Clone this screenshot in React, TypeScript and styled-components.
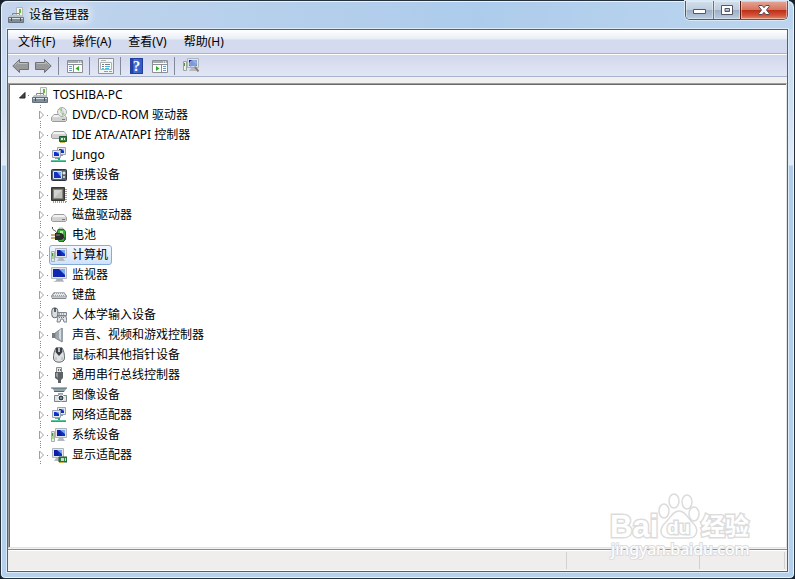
import React from "react";
import styled, { createGlobalStyle, css } from "styled-components";

const Global = createGlobalStyle`
  * { box-sizing: border-box; }
  html, body, #root { height: 100%; margin: 0; }
  body { background: #16202c; overflow: hidden; }
  body, button { font: 12px/16px "Noto Sans", "Noto Sans CJK SC", sans-serif; color: #000; }
  button { padding: 0; border: 0; background: none; }
  svg { display: block; flex: none; }
`;

const Window = styled.div`
  height: 100%;
  display: flex;
  flex-direction: column;
  padding: 0 6px 6px;
  border: 1px solid #26303b;
  border-radius: 7px 7px 5px 5px;
  box-shadow: inset 0 0 0 1px #e9f3fc;
  background: linear-gradient(#c4d8ef 0, #cfe0f3 110px, #e2ecf7 164px, #b0cce9 165px, #b5d0ec 100%);
`;

const TitleBar = styled.header`
  height: 28px;
  flex: none;
  margin: 0 -5px;
  display: flex;
  align-items: flex-start;
  justify-content: space-between;
  border-radius: 6px 6px 0 0;
  box-shadow: inset 0 1px #e9f3fc;
  background: linear-gradient(100deg, #c4d5ec 0, #bcd2ec 15%, #adcceb 60%, #bcd5ef 100%);
`;

const Title = styled.h1`
  margin: 0;
  padding: 6px 8px 0 6px;
  display: flex;
  align-items: center;
  gap: 5px;
  font-size: 12px;
  font-weight: 400;
  text-shadow: 0 0 8px #fff, 0 0 10px #fff, 0 0 14px #fff;
`;

const Captions = styled.div`
  display: flex;
  margin-right: 5px;
  border: 1px solid #4c5d73;
  border-top: 0;
  border-radius: 0 0 5px 5px;
  overflow: hidden;
  box-shadow: 0 0 0 1px #d9e8f7;
`;

const CaptionButton = styled.button<{ $close?: boolean }>`
  width: ${(p) => (p.$close ? 47 : 27)}px;
  height: 18px;
  display: grid;
  place-items: center;
  border-left: 1px solid #63758c;
  box-shadow: inset 0 0 0 1px #ffffff66;
  background: linear-gradient(#d3deea 0, #bfcddd 48%, #9caec4 50%, #b9cce0 100%);
  &:first-child { border-left: 0; }
  ${(p) => p.$close && css`
    border-left-color: #5e1b14;
    background: linear-gradient(#e5a796 0, #d67560 48%, #b92d14 50%, #d4533a 80%, #e08a6a 100%);
  `}
`;

const Client = styled.main`
  flex: 1;
  min-height: 0;
  display: flex;
  flex-direction: column;
  border: 1px solid #56616e;
  box-shadow: 0 0 0 1px #dceafa;
  background: #f0f0f0;
`;

const MenuBar = styled.nav`
  height: 24px;
  flex: none;
  display: flex;
  align-items: center;
  gap: 1px;
  padding: 0 2px;
  border-bottom: 1px solid #b0b3bb;
  background: linear-gradient(#fff 0, #e9edf7 9px, #d4daed 10px, #d5dbee 100%);
`;

const MenuItem = styled.button`
  height: 20px;
  padding: 0 8px;
`;

const ToolBar = styled.div`
  height: 23px;
  flex: none;
  display: flex;
  align-items: center;
  padding: 1px 1px 0;
  border-top: 1px solid #fff;
  border-bottom: 1px solid #a8b4cc;
  background: linear-gradient(#d2d8ec, #e1e7f5);
`;

const ToolButton = styled.button`
  width: 23px;
  height: 20px;
  display: grid;
  place-items: center;
`;

const Separator = styled.span`
  width: 1px;
  height: 18px;
  margin: 0 4px 0 3px;
  background: #84899a;
`;

const TreePane = styled.section`
  flex: 1;
  min-height: 0;
  margin: 6px 0 1px;
  padding-left: 8px;
  overflow: hidden;
  border: 1px solid #a0a0a0;
  border-right-color: #e3e3e3;
  border-bottom-color: #e3e3e3;
  box-shadow: inset 1px 1px #696969;
  background: #fff;
`;

const List = styled.ul`
  margin: 0;
  padding: 1px 0 0;
  list-style: none;
  & & { padding: 0 0 0 19px; }
`;

const Row = styled.div`
  height: 20px;
  display: flex;
  align-items: center;
`;

const Toggle = styled.button<{ $line?: boolean }>`
  width: 11px;
  height: 20px;
  display: grid;
  place-items: center;
  ${(p) => p.$line && css`
    background: repeating-linear-gradient(#888 0 1px, #fff 1px 2px) 4px 0 / 1px 100% no-repeat;
  `}
  svg { background: #fff; }
`;

const Dots = styled.span`
  width: 2px;
  height: 1px;
  background: repeating-linear-gradient(90deg, #888 0 1px, #fff 1px 2px);
`;

const Entry = styled.button<{ $selected?: boolean }>`
  height: 20px;
  display: flex;
  align-items: center;
  gap: 5px;
  padding: 0 3px 0 1px;
  border: 1px solid transparent;
  border-radius: 3px;
  white-space: nowrap;
  ${(p) => p.$selected && css`
    border-color: #84acdd;
    background: linear-gradient(#f2f7fe, #cfe2fb);
  `}
`;

const StatusBar = styled.footer`
  height: 22px;
  flex: none;
  display: flex;
  border-top: 1px solid #8d8d8d;
  background: #f0eded;
  box-shadow: inset 0 1px #fff, inset 0 -1px #fff;
`;

const StatusCell = styled.span<{ $grow?: boolean }>`
  flex: ${(p) => (p.$grow ? "1" : "0 1 133px")};
  margin: 2px 0;
  border-right: 1px solid #d2d0d0;
  &:last-child { flex-basis: 85px; margin-right: 2px; }
`;

const Watermark = styled.div`
  position: absolute;
  right: 40px;
  bottom: 14px;
  width: 146px;
  height: 72px;
  pointer-events: none;
`;

const Svg = ({ children, w = 16, h = 16 }: { children: React.ReactNode; w?: number; h?: number }) => (
  <svg width={w} height={h} viewBox={`0 0 ${w} ${h}`} aria-hidden="true">{children}</svg>
);

const Screen = ({ x = 0, y = 0 }: { x?: number; y?: number }) => (
  <g transform={`translate(${x} ${y})`}>
    <path d="M4 10h4l2 3H2z" fill="#b4b9bf" />
    <path d="M.5.5h11v9H.5z" fill="#e2e6ea" stroke="#b0b5bc" />
    <path d="M2 2h8v6H2z" fill="#1230c0" />
    <path d="M5 2h5v4z" fill="#7ba4f2" />
    <path d="M2 2h3l2 6H2z" fill="#0b1ea4" />
  </g>
);
const MiniScreen = ({ x, y }: { x: number; y: number }) => (
  <g transform={`translate(${x} ${y})`}>
    <path d="M.5.5h8v7h-8z" fill="#e6eaf0" stroke="#9aa4b4" />
    <path d="M2 2h5v4H2z" fill="#1230c0" />
    <path d="M4 2h3v2z" fill="#86acf5" />
    <path d="M3 8h3v1H3z" fill="#8e98a6" />
  </g>
);

const Computer = () => (
  <Svg>
    <Screen x={4} y={1} />
    <path d="M.5 4.500h3v10h-3z" fill="#eceee9" stroke="#a9aea6" />
    <path d="M1 6h2v6H1z" fill="#a9d59b" />
    <path d="M1 6h1v3H1z" fill="#3f9c33" />
  </Svg>
);
const Monitor = () => (
  <Svg>
    <path d="M6 11h5l2 4H4z" fill="#a9b0b8" />
    <path d="M.5.5h15v11H.5z" fill="#e2e6ea" stroke="#b3b8bf" />
    <path d="M2 2h12v8H2z" fill="#0e28b4" />
    <path d="M8 2h6v6z" fill="#83aaf5" />
    <path d="M3 14.500h10" stroke="#c4c8cc" />
  </Svg>
);
const Display = () => (
  <Svg>
    <Screen x={1} y={1} />
    <path d="M8 10h8v5H8z" fill="#2b8049" stroke="#235a35" />
    <path d="M10 11h3v3h-3zM14 11h1v3h-1z" fill="#c8dccb" />
    <path d="M8 15.500h5" stroke="#d5b23e" />
  </Svg>
);
const Network = () => (
  <Svg>
    <MiniScreen x={6} y={0} />
    <MiniScreen x={1} y={3} />
    <path d="M7 11h2v2h6v2H0v-2h7z" fill="#27a678" />
    <path d="M0 13.500h15" stroke="#5cc79c" />
  </Svg>
);
const Toolbox = () => (
  <Svg>
    <path d="M8.500.5h6v9h-6z" fill="#f3f5f0" stroke="#b2b8b2" />
    <path d="M11 2h2v4h-2z" fill="#61b948" />
    <path d="M4.500 9V6.500h7V9" fill="none" stroke="#7d868e" />
    <path d="M2 8h12l2 3H0z" fill="#b9c4cc" />
    <path d="M.5 10.500h15v5H.5z" fill="#7f8d98" stroke="#65727d" />
    <path d="M1 11.500h14" stroke="#dbe3e8" />
    <path d="M3 11h1v3H3zM12 11h1v3h-1z" fill="#444f57" />
  </Svg>
);
const Drive = ({ y = 0 }: { y?: number }) => (
  <g transform={`translate(0 ${y})`}>
    <path d="M3 5.500h10l2.500 3v3l-1 1H1.500l-1-1v-3z" fill="#b8bab9" stroke="#999c9b" />
    <path d="M3 6h10l2 2.500H1z" fill="#f2f2f2" />
    <path d="M1 9h14v3H1z" fill="#d0d1d0" />
    <path d="M11 10h3v1h-3z" fill="#38a33a" />
  </g>
);
const Optical = () => (
  <Svg>
    <Drive y={2} />
    <circle cx="11" cy="5" r="4.500" fill="#e6eaea" stroke="#a6adaf" />
    <path d="M11 5 8 2l3-1zM11 5l3 2-3 2z" fill="#9acd78" />
    <circle cx="11" cy="5" r="1.200" fill="#fff" stroke="#949b9d" strokeWidth=".6" />
  </Svg>
);
const Ide = () => (
  <Svg>
    <Drive y={-1} />
    <path d="M8.500 9.500h7v5h-7z" fill="#358a4a" stroke="#1c5831" />
    <path d="M10 11h2v2h-2zM13 11h1v2h-1z" fill="#dbe6d8" />
    <path d="M9 15.500h5" stroke="#ceb84d" />
  </Svg>
);
const Disk = () => <Svg><Drive y={2} /></Svg>;
const Portable = () => (
  <Svg>
    <rect x=".5" y="2.500" width="15" height="11" rx="1" fill="#56616d" stroke="#2c333c" />
    <path d="M2.500 4.500h8v7h-8z" fill="#1532bd" stroke="#d9e2ed" />
    <path d="M6 5h4v5z" fill="#7ea9f5" />
    <circle cx="13" cy="6" r="1.500" fill="#e3e8ec" />
    <path d="M12 9h2v2h-2z" fill="#c4cbd1" />
  </Svg>
);
const Cpu = () => (
  <Svg>
    <path d="M2 15h14M15 2v14" stroke="#c99b48" strokeWidth="2" strokeDasharray="1 1" />
    <path d="M.5.5h13v13H.5z" fill="#4f4e4b" stroke="#373633" />
    <path d="M2.500 2.500h9v9h-9z" fill="#bebebb" stroke="#858580" />
    <path d="M3 3h8l-8 8z" fill="#d2d2cf" />
  </Svg>
);
const Battery = () => (
  <Svg>
    <path d="M8 1h4v2H8z" fill="#d1d7d1" stroke="#8b928b" strokeWidth=".6" />
    <path d="M7 2.500h6l1.500 2v8l-2 2H8L6.500 12V4z" fill="#3fae3c" stroke="#2b6a2d" />
    <path d="M9 4h3v5H9z" fill="#b4eba4" />
    <path d="M1.500 0c-1 4 5 3 4 7" fill="none" stroke="#444" />
    <path d="M4 6h5c3 0 4 2 4 3.500S12 13 9 13H4z" fill="#2b2b2b" />
    <path d="M5 8h4" stroke="#8a8a8a" />
    <path d="M0 8h4M0 11h4" stroke="#b3984a" strokeWidth="1.500" />
    <path d="M12 10c3 0 2 3 0 5" fill="none" stroke="#333" />
  </Svg>
);
const Keyboard = () => (
  <Svg>
    <path d="M3 5h10l3 4-1 3H1L0 9z" fill="#80868b" />
    <path d="M3.500 5.500h9l2.500 4H1z" fill="#e4e6e8" />
    <path d="M3 6.500h10M2 8.500h12" stroke="#9a9fa3" strokeDasharray="1 1" />
    <path d="M1 10.500h14" stroke="#c4c8cb" />
  </Svg>
);
const Hid = () => (
  <Svg>
    <rect x=".8" y=".8" width="6" height="10" rx="3" fill="#dadddf" stroke="#62696f" />
    <path d="M4 1v4" stroke="#33383c" strokeWidth="1.500" />
    <path d="M7 5.500h8.500v3H7z" fill="#e2e6e9" stroke="#7d858c" />
    <path d="M7 9h8l1 6h-3l-1-3h-2l-1 3H6z" fill="#e2e6e9" stroke="#7b848b" />
    <path d="M8 7h6M8 10.500h6" stroke="#6c757d" strokeDasharray="1 1" />
  </Svg>
);
const Speaker = () => (
  <Svg>
    <path d="M1 6h3v5H1z" fill="#737c84" />
    <path d="M4 6 11 1v14L4 11z" fill="#9da6ad" stroke="#737c84" strokeWidth=".7" />
    <path d="M8 4 11 1v14L8 11z" fill="#d5dade" />
    <path d="M11 1v14" stroke="#677179" />
  </Svg>
);
const Mouse = () => (
  <Svg>
    <path d="M5 .8h6c2 3 2.500 7 2.500 10S11 15.200 8 15.200 2.500 14 2.500 11 3 4 5 .8z" fill="#dfe2e5" stroke="#62686d" />
    <path d="M5 1h6l.5 4L8 9 4.500 5z" fill="#3b3f43" />
    <path d="M8 1v4" stroke="#e9ecee" strokeWidth="1.500" />
    <path d="M5 10v3M11 10v3" stroke="#a9afb4" />
  </Svg>
);
const Usb = () => (
  <Svg>
    <path d="M5.500.5h5v5h-5z" fill="#e4e6e7" stroke="#8b9092" />
    <path d="M7 2h1v2H7zM9 2h1v2H9z" fill="#6c7071" />
    <path d="M4 5h8v6l-2 2v3H7v-3l-3-2z" fill="#5c6266" />
    <path d="M5 6h2v5L5 9z" fill="#979da1" />
  </Svg>
);
const Imaging = () => (
  <Svg>
    <path d="M1 1h15l-3 4H4z" fill="#8fa1ab" />
    <path d="M0 1h16M3 4.500h10" stroke="#55666f" />
    <path d="M3.500 8.500h12v6h-12z" fill="#e0e4e6" stroke="#78838a" />
    <path d="M7 6h5v2H7z" fill="#98a4ab" />
    <circle cx="10" cy="11" r="3" fill="#37454d" stroke="#fafafa" />
    <circle cx="10" cy="11" r="1" fill="#8fa9b8" />
  </Svg>
);
const Arrow = ({ forward = false }: { forward?: boolean }) => (
  <Svg w={17}>
    <g transform={forward ? "matrix(-1 0 0 1 17 0)" : undefined}>
      <path d="M.8 8 7.500 1.500v3h9v7h-9v3z" fill="#98999a" stroke="#6f7173" />
      <path d="M2.500 7.500 6.500 3.800v1.700h9" fill="none" stroke="#bdbfc0" />
    </g>
  </Svg>
);
const Panel = ({ right = false }: { right?: boolean }) => (
  <Svg>
    <path d="M.5 2.500h15v12H.5z" fill="#fff" stroke="#8b8f93" />
    <path d="M1 3h14v2H1z" fill="#a6abb0" />
    <path d="M11 4h1M13 4h1" stroke="#fff" />
    <path d="M0 6.500h16" stroke="#8b8f93" />
    {right ? (
      <><path d="M9.500 7v7" stroke="#8b8f93" /><path d="M4 8v5l3.500-2.500z" fill="#35a92e" /><path d="M11 8.500h3M11 10.500h3M11 12.500h3" stroke="#6c9cc6" /></>
    ) : (
      <><path d="M6.500 7v7" stroke="#8b8f93" /><path d="M12 8v5l-3.500-2.500z" fill="#35a92e" /><path d="M2 8.500h3M2 10.500h3M2 12.500h3" stroke="#6c9cc6" /></>
    )}
  </Svg>
);
const Properties = () => (
  <Svg>
    <path d="M.5.5h15v15H.5z" fill="#f3f4f5" stroke="#909497" />
    <path d="M2.500 4.500h11v7h-11zM3 2.500h5" fill="#fff" stroke="#adb1b4" />
    <path d="M4 6.500h2M4 8.500h2M7 6.500h5" stroke="#777b80" />
    <path d="M7 8.500h5M4 10.500h2M7 10.500h4M6 13.500h4M11 13.500h3" stroke="#42bce2" />
  </Svg>
);
const HelpMark = styled.span`
  width: 13px;
  height: 16px;
  border: 1px solid #263f98;
  background: linear-gradient(90deg, #2442a6 0 2px, #4b74d8 3px, #3258c4);
  color: #fff;
  font: 700 15px/14px "Liberation Serif", serif;
  text-align: center;
`;
const Scan = () => (
  <Svg>
    <path d="M.5 3.500h3v9h-3z" fill="#eceee9" stroke="#9da1a0" />
    <path d="M1 5h1v3H1z" fill="#3f9c33" />
    <Screen x={4} y={0} />
    <circle cx="10" cy="6" r="3.500" fill="#cfe5ff" fillOpacity=".6" stroke="#8fa9c6" />
    <path d="m12 9 3.500 4.500" stroke="#8a796a" strokeWidth="2" />
  </Svg>
);

const devices: [string, React.ComponentType][] = [
  ["DVD/CD-ROM 驱动器", Optical],
  ["IDE ATA/ATAPI 控制器", Ide],
  ["Jungo", Network],
  ["便携设备", Portable],
  ["处理器", Cpu],
  ["磁盘驱动器", Disk],
  ["电池", Battery],
  ["计算机", Computer],
  ["监视器", Monitor],
  ["键盘", Keyboard],
  ["人体学输入设备", Hid],
  ["声音、视频和游戏控制器", Speaker],
  ["鼠标和其他指针设备", Mouse],
  ["通用串行总线控制器", Usb],
  ["图像设备", Imaging],
  ["网络适配器", Network],
  ["系统设备", Computer],
  ["显示适配器", Display],
];

const tools: ([string, React.ReactNode] | null)[] = [
  ["后退", <Arrow />],
  ["前进", <Arrow forward />],
  null,
  ["显示/隐藏控制台树", <Panel />],
  null,
  ["属性", <Properties />],
  null,
  ["帮助", <HelpMark>?</HelpMark>],
  ["显示/隐藏操作窗格", <Panel right />],
  null,
  ["扫描检测硬件改动", <Scan />],
];

export default function App() {
  return (
    <>
      <Global />
      <Window>
        <TitleBar>
          <Title><Toolbox />设备管理器</Title>
          <Captions>
            <CaptionButton aria-label="最小化">
              <Svg w={13} h={10}><path d="M.5 4.500h12v4H.5z" fill="#fff" stroke="#535666" /></Svg>
            </CaptionButton>
            <CaptionButton aria-label="最大化">
              <Svg w={12} h={10}><path fillRule="evenodd" d="M.5.5h11v9H.5zM4 3.500v3h4.500v-3z" fill="#fff" stroke="#535666" /></Svg>
            </CaptionButton>
            <CaptionButton $close aria-label="关闭">
              <Svg w={12} h={10}><path d="M.8.5h3.400L6 2.700 7.800.5h3.400v1L8.500 5l2.700 3.500v1H7.800L6 7.300 4.200 9.500H.8v-1L3.500 5 .8 1.500z" fill="#fff" stroke="#5b4650" /></Svg>
            </CaptionButton>
          </Captions>
        </TitleBar>
        <Client>
          <MenuBar>
            {["文件(F)", "操作(A)", "查看(V)", "帮助(H)"].map((m) => <MenuItem key={m}>{m}</MenuItem>)}
          </MenuBar>
          <ToolBar role="toolbar">
            {tools.map((t, i) => t ? <ToolButton key={i} aria-label={t[0]}>{t[1]}</ToolButton> : <Separator key={i} />)}
          </ToolBar>
          <TreePane>
            <List>
              <li>
                <Row>
                  <Toggle aria-label="折叠">
                    <Svg w={7} h={7}><path d="M6 .5V6H.5z" fill="#444" stroke="#222" /></Svg>
                  </Toggle>
                  <Dots />
                  <Entry><Toolbox />TOSHIBA-PC</Entry>
                </Row>
                <List>
                  {devices.map(([name, Icon]) => (
                    <li key={name}>
                      <Row>
                        <Toggle $line aria-label={`展开 ${name}`}>
                          <Svg w={7} h={12}><path d="M1.500 2v8l4-4z" fill="#fff" stroke="#a0a0a0" /></Svg>
                        </Toggle>
                        <Dots />
                        <Entry $selected={name === "计算机"}><Icon />{name}</Entry>
                      </Row>
                    </li>
                  ))}
                </List>
              </li>
            </List>
          </TreePane>
          <StatusBar><StatusCell $grow /><StatusCell /><StatusCell /></StatusBar>
        </Client>
      </Window>
      <Watermark>
        <svg width="146" height="72" viewBox="0 0 146 72" fill="#fff" stroke="#dcdcdc">
          <g strokeWidth="1.500">
            <ellipse cx="55" cy="18" rx="5" ry="7" /><ellipse cx="65" cy="8" rx="5" ry="7" />
            <ellipse cx="78" cy="9" rx="5" ry="7" /><ellipse cx="85" cy="21" rx="5" ry="7" />
            <path d="M70 18c6 0 8 6 13 11 8 7 5 16-3 16H60c-9 0-11-9-3-16 5-5 7-11 13-11z" />
          </g>
          <g fontFamily="Liberation Sans, Noto Sans CJK SC, sans-serif" fontWeight="700" strokeWidth="3" paintOrder="stroke">
            <text x="1" y="44" fontSize="31">Bai</text>
            <text x="58" y="41" fontSize="19">du</text>
            <text x="92" y="42" fontSize="24">经验</text>
          </g>
          <text x="2" y="62" fontSize="16" fontFamily="Noto Sans, sans-serif" paintOrder="stroke" strokeWidth="2">jingyan.baidu.com</text>
        </svg>
      </Watermark>
    </>
  );
}
